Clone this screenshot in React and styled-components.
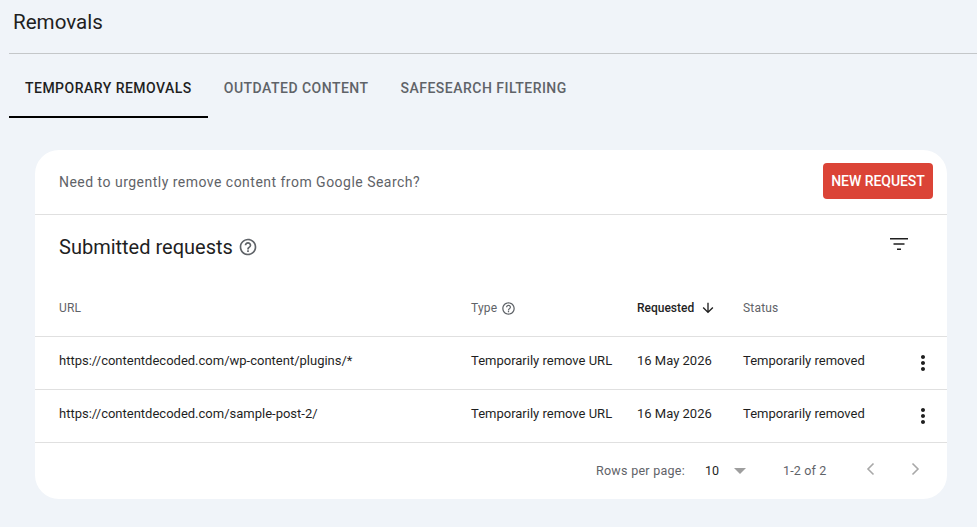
import styled, { createGlobalStyle } from "styled-components";

const GlobalStyle = createGlobalStyle`
  html, body {
    margin: 0;
    padding: 0;
    background: #f0f4f9;
    font-family: Roboto, "Liberation Sans", sans-serif;
  }
`;

const Page = styled.div`
  width: 977px;
  height: 527px;
  overflow: hidden;
  padding-left: 9px;
  box-sizing: border-box;
`;

const TitleBar = styled.div`
  height: 53px;
  padding: 0 0 0 4px;
  display: flex;
  align-items: flex-start;
  border-bottom: 1px solid #c4c7c9;
`;

const Title = styled.h1`
  margin: 9px 0 0;
  font-size: 20.6px;
  line-height: 26px;
  font-weight: 400;
  color: #1f1f1f;
`;

const Tabs = styled.div`
  display: flex;
  height: 64px;
`;

const Tab = styled.div`
  box-sizing: border-box;
  padding: 6px 16px 0;
  display: flex;
  align-items: center;
  font-size: 14px;
  font-weight: 500;
  letter-spacing: 0.48px;
  white-space: nowrap;
  color: ${(p) => (p.$active ? "#1f1f1f" : "#5f6368")};
  border-bottom: 2px solid ${(p) => (p.$active ? "#000" : "transparent")};
`;

const Card = styled.div`
  box-sizing: border-box;
  width: 912px;
  height: 349px;
  margin: 32px 0 0 26px;
  background: #fff;
  border-radius: 24px;
  overflow: hidden;
`;

const Banner = styled.div`
  box-sizing: border-box;
  height: 65px;
  padding: 0 14px 0 24px;
  display: flex;
  align-items: center;
  justify-content: space-between;
  border-bottom: 1px solid #e0e0e0;
  font-size: 14px;
  letter-spacing: 0.48px;
  color: #5f6368;
`;

const RequestButton = styled.button`
  width: 110px;
  height: 36px;
  padding: 0;
  border: 0;
  border-radius: 4px;
  background: #db4437;
  color: #fff;
  font: 500 14px Roboto, sans-serif;
  letter-spacing: -0.05px;
  position: relative;
  top: -1px;
`;

const SectionHead = styled.div`
  box-sizing: border-box;
  height: 65px;
  padding: 0 36px 0 24px;
  display: flex;
  align-items: center;
  justify-content: space-between;
`;

const SectionTitle = styled.h2`
  margin: 0 0 2px;
  display: flex;
  align-items: center;
  gap: 5px;
  font-size: 20px;
  font-weight: 400;
  color: #1f1f1f;
`;

const FilterIcon = styled.svg`
  display: block;
  width: 24px;
  height: 24px;
  fill: #1f1f1f;
  margin-bottom: 8px;
`;

const Row = styled.div`
  box-sizing: border-box;
  display: grid;
  grid-template-columns: 412px 166px 106px 1fr 48px;
  align-items: center;
  padding-left: 24px;
  height: ${(p) => (p.$head ? "57px" : "53px")};
  border-bottom: 1px solid #e0e0e0;
  font-size: 13px;
  color: #1f1f1f;
`;

const HeadCell = styled.div`
  display: flex;
  align-items: center;
  gap: ${(p) => (p.$sorted ? "6px" : "4px")};
  font-size: 12px;
  font-weight: ${(p) => (p.$sorted ? 500 : 400)};
  letter-spacing: ${(p) => (p.$sorted ? "0" : "0.2px")};
  color: ${(p) => (p.$sorted ? "#1f1f1f" : "#5f6368")};
`;

const Cell = styled.div`
  white-space: nowrap;
  padding-bottom: 6px;
`;

const Kebab = styled.svg`
  display: block;
  width: 24px;
  height: 24px;
  fill: #1f1f1f;
  margin-left: 12px;
`;

const Footer = styled.div`
  height: 55px;
  display: flex;
  align-items: center;
  font-size: 12.5px;
  color: #5f6368;
  padding-left: 561px;
`;

const RowsLabel = styled.span`
  letter-spacing: 0.27px;
  width: 109px;
`;

const RowsValue = styled.span`
  color: #1f1f1f;
  width: 29px;
`;

const Caret = styled.span`
  width: 0;
  height: 0;
  border-left: 6px solid transparent;
  border-right: 6px solid transparent;
  border-top: 6px solid #9e9e9e;
  margin-right: 37px;
`;

const RangeLabel = styled.span`
  letter-spacing: 0.15px;
  width: 76px;
`;

const Pager = styled.svg`
  display: block;
  width: 24px;
  height: 24px;
  fill: none;
  stroke: #a8a8a8;
  stroke-width: 1.6;
  margin-left: ${(p) => p.$gap}px;
  position: relative;
  top: -2px;
`;

function HelpIcon({ size }) {
  return (
    <svg width={size} height={size} viewBox="0 0 24 24" fill="#5f6368">
      <path d="M11 18h2v-2h-2v2zm1-16C6.48 2 2 6.48 2 12s4.48 10 10 10 10-4.48 10-10S17.52 2 12 2zm0 18c-4.41 0-8-3.59-8-8s3.59-8 8-8 8 3.59 8 8-3.59 8-8 8zm0-14c-2.21 0-4 1.79-4 4h2c0-1.1.9-2 2-2s2 .9 2 2c0 2-3 1.75-3 5h2c0-2.25 3-2.5 3-5 0-2.21-1.79-4-4-4z" />
    </svg>
  );
}

function MoreButton() {
  return (
    <Kebab viewBox="0 0 24 24">
      <path d="M12 8c1.1 0 2-.9 2-2s-.9-2-2-2-2 .9-2 2 .9 2 2 2zm0 2c-1.1 0-2 .9-2 2s.9 2 2 2 2-.9 2-2-.9-2-2-2zm0 6c-1.1 0-2 .9-2 2s.9 2 2 2 2-.9 2-2-.9-2-2-2z" />
    </Kebab>
  );
}

const requests = [
  "https://contentdecoded.com/wp-content/plugins/*",
  "https://contentdecoded.com/sample-post-2/",
];

export default function App() {
  return (
    <Page>
      <GlobalStyle />
      <TitleBar>
        <Title>Removals</Title>
      </TitleBar>
      <Tabs>
        <Tab $active>TEMPORARY REMOVALS</Tab>
        <Tab>OUTDATED CONTENT</Tab>
        <Tab>SAFESEARCH FILTERING</Tab>
      </Tabs>
      <Card>
        <Banner>
          Need to urgently remove content from Google Search?
          <RequestButton>NEW REQUEST</RequestButton>
        </Banner>
        <SectionHead>
          <SectionTitle>
            Submitted requests
            <HelpIcon size={20} />
          </SectionTitle>
          <FilterIcon viewBox="0 0 24 24">
            <path d="M3 6h18v1.6H3zM6.5 11.2h11v1.6h-11zM10 16.4h4V18h-4z" />
          </FilterIcon>
        </SectionHead>
        <Row $head>
          <HeadCell>URL</HeadCell>
          <HeadCell>
            Type
            <HelpIcon size={15} />
          </HeadCell>
          <HeadCell $sorted>
            Requested
            <svg width="16" height="16" viewBox="0 0 24 24" fill="#1f1f1f">
              <path d="M20 12l-1.41-1.41L13 16.17V4h-2v12.17l-5.58-5.59L4 12l8 8 8-8z" />
            </svg>
          </HeadCell>
          <HeadCell>Status</HeadCell>
        </Row>
        {requests.map((url) => (
          <Row key={url}>
            <Cell>{url}</Cell>
            <Cell>Temporarily remove URL</Cell>
            <Cell>16 May 2026</Cell>
            <Cell>Temporarily removed</Cell>
            <MoreButton />
          </Row>
        ))}
        <Footer>
          <RowsLabel>Rows per page:</RowsLabel>
          <RowsValue>10</RowsValue>
          <Caret />
          <RangeLabel>1-2 of 2</RangeLabel>
          <Pager viewBox="0 0 24 24" $gap={0}>
            <path d="M14.5 6.5L9 12l5.5 5.5" />
          </Pager>
          <Pager viewBox="0 0 24 24" $gap={20}>
            <path d="M9.5 6.5L15 12l-5.5 5.5" />
          </Pager>
        </Footer>
      </Card>
    </Page>
  );
}
